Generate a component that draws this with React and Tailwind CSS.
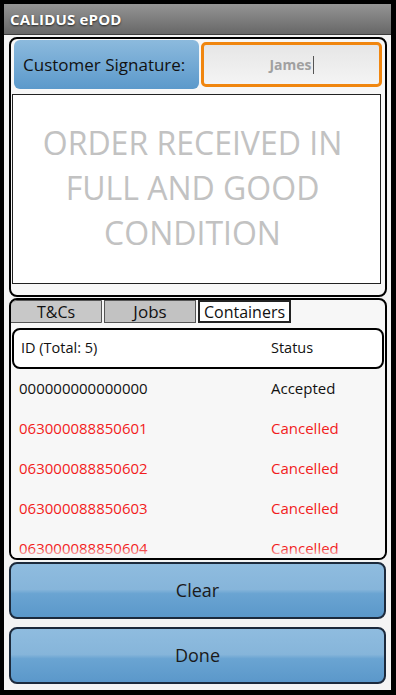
import React from 'react';

const jobs = [
  { id: '000000000000000', status: 'Accepted', cancelled: false },
  { id: '063000088850601', status: 'Cancelled', cancelled: true },
  { id: '063000088850602', status: 'Cancelled', cancelled: true },
  { id: '063000088850603', status: 'Cancelled', cancelled: true },
  { id: '063000088850604', status: 'Cancelled', cancelled: true },
];

const font = { fontFamily: '"Open Sans", "Noto Sans", sans-serif' };

const App = () => {
  return (
    <div className="w-[396px] h-[695px] bg-black pt-[4px] pl-[4px] pr-[5px] pb-[5px] flex flex-col" style={font}>
      {/* Title bar */}
      <div className="h-[31px] bg-gradient-to-b from-[#959595] to-[#676767] flex items-center pl-[6px] border-b border-[#3a3a3a]">
        <span className="text-white font-bold text-[15px] tracking-[0.2px] [text-shadow:0_1px_2px_rgba(0,0,0,0.7)]">CALIDUS ePOD</span>
      </div>

      {/* Body */}
      <div className="flex-1 bg-[#f4f4f4] flex flex-col pl-[5px] pr-[4px]">
        {/* Signature panel */}
        <div className="mt-[2px] h-[260px] border-2 border-black rounded-[8px] bg-[#f7f7f7] flex flex-col">
          <div className="flex gap-[2px] pl-[3px] pt-[1px]">
            <div className="w-[185px] h-[49px] rounded-[6px] bg-gradient-to-b from-[#8cbadd] to-[#5b99cb] flex items-center pl-[9px] text-[17px] text-[#111]">
              Customer Signature:
            </div>
            <div className="w-[181px] h-[45px] mt-[2px] rounded-[5px] border-[3px] border-[#f0860f] bg-gradient-to-b from-[#e6e6e6] to-[#f4f4f4] flex items-center justify-center">
              <span className="text-[14px] font-bold text-[#a0a0a0]">James</span>
              <span className="w-px h-[18px] bg-[#555] ml-[1px]" />
            </div>
          </div>
          <div className="ml-[1px] mt-[5px] w-[369px] h-[190px] border border-[#222] bg-white flex items-center justify-center">
            <p className="text-center text-[32px] leading-[45px] text-[#c2c2c2] pb-[4px] pr-[8px]">
              ORDER RECEIVED IN<br />FULL AND GOOD<br />CONDITION
            </p>
          </div>
        </div>

        {/* Jobs panel */}
        <div className="mt-[1px] h-[262px] border-2 border-black rounded-[8px] bg-[#f7f7f7] flex flex-col overflow-hidden">
          <div className="flex h-[23px] text-[16px] text-[#111]">
            <div className="w-[92px] ml-[-1px] bg-[#c8c8c8] border border-[#555] rounded-tl-[6px] flex items-center justify-center">T&amp;Cs</div>
            <div className="w-[92px] ml-[2px] bg-[#c2c2c2] border border-[#555] flex items-center justify-center text-[17px]">Jobs</div>
            <div className="w-[93px] ml-[2px] bg-white border-2 border-[#222] flex items-center justify-center">Containers</div>
          </div>
          <div className="mx-[1px] mt-[5px] h-[41px] border-2 border-black rounded-[8px] bg-white flex items-center text-[14.5px] text-[#111] pb-[1px]">
            <span className="w-[257px] pl-[7px]">ID (Total: 5)</span>
            <span>Status</span>
          </div>
          <div className="relative flex-1 overflow-hidden">
            {jobs.map((job) => (
              <div
                key={job.id}
                className={`h-[40px] flex items-center text-[15px] pb-[1px] ${job.cancelled ? 'text-[#f21c1c]' : 'text-[#111]'}`}
              >
                <span className="w-[260px] pl-[8px]">{job.id}</span>
                <span>{job.status}</span>
              </div>
            ))}
            <div className="absolute left-0 right-0 bottom-0 h-[10px] bg-gradient-to-b from-transparent to-[#f7f7f7]" />
          </div>
        </div>

        {/* Action buttons */}
        <div className="mt-[2px] flex flex-col gap-[8px] pr-[1px]">
          {['Clear', 'Done'].map((label) => (
            <button
              key={label}
              className="h-[57px] rounded-[8px] border-2 border-[#1c2a3c] bg-[linear-gradient(to_bottom,#8fbcdf_0%,#86b5da_48%,#6aa4d2_56%,#5b98ca_100%)] text-[18px] text-[#1a1a1a] flex items-center justify-center"
            >
              {label}
            </button>
          ))}
        </div>
      </div>
    </div>
  );
};

export default App;
